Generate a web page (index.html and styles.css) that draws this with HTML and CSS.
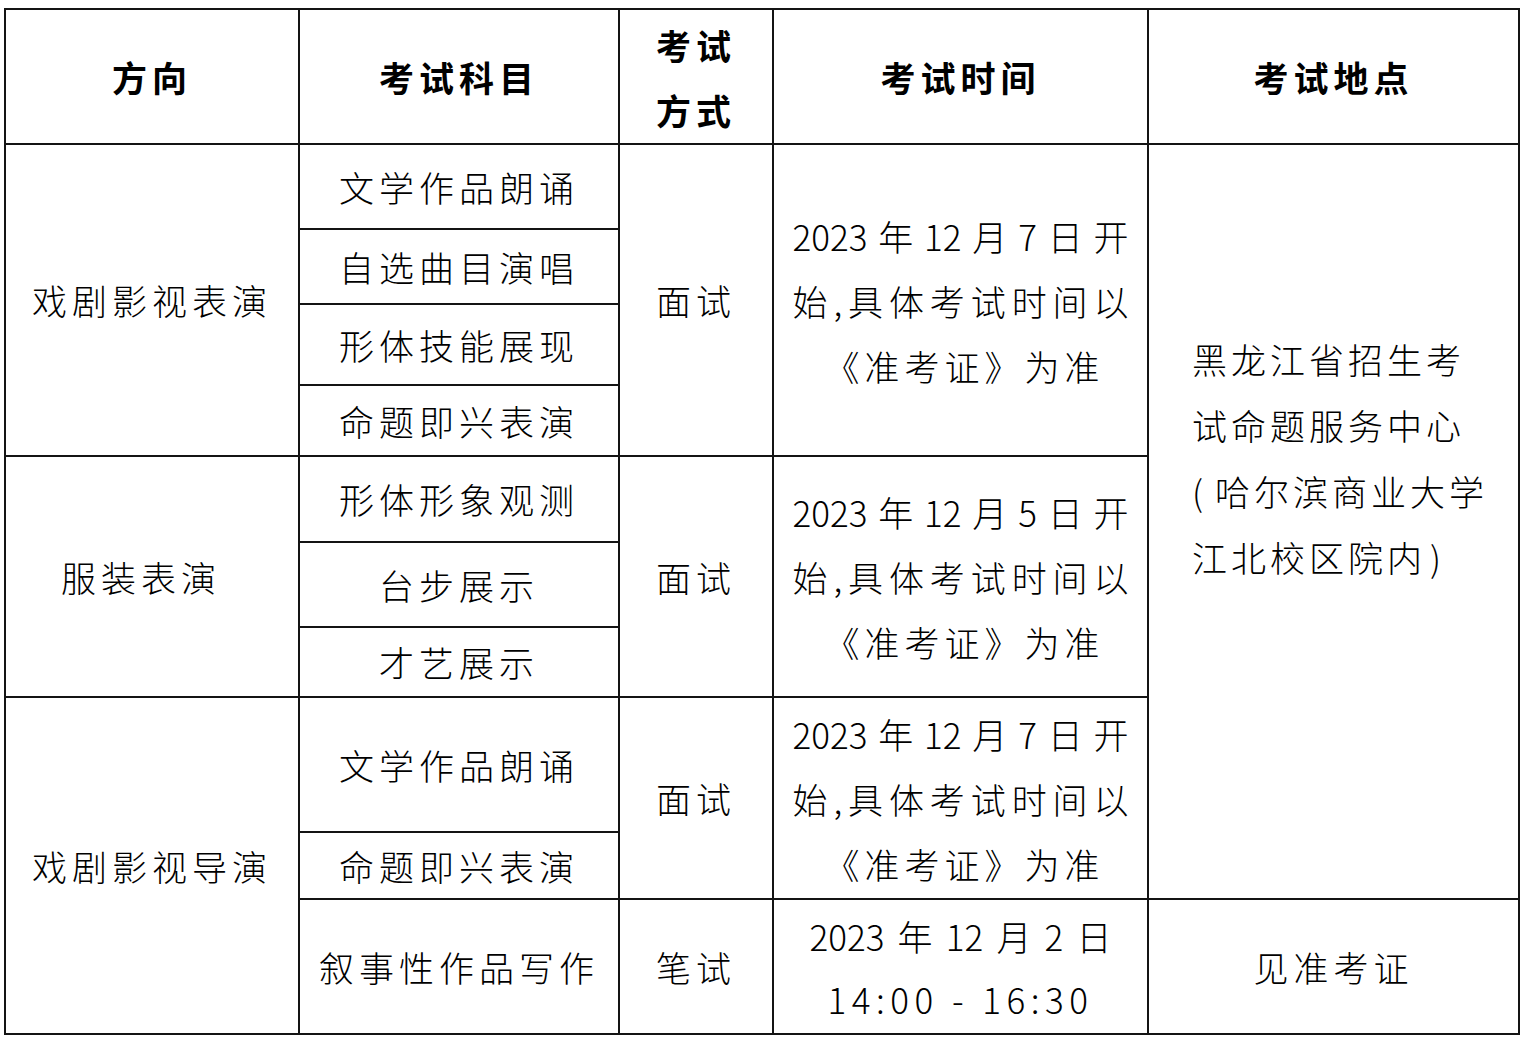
FILE: index.html
```html
<!DOCTYPE html>
<html lang="zh-CN">
<head>
<meta charset="utf-8">
<title>考试安排</title>
<link rel="stylesheet" href="styles.css">
</head>
<body>
<table class="exam">
  <colgroup>
    <col class="c1"><col class="c2"><col class="c3"><col class="c4"><col class="c5">
  </colgroup>
  <tr class="r-head">
    <th>方向</th>
    <th>考试科目</th>
    <th class="two">考试<br>方式</th>
    <th>考试时间</th>
    <th>考试地点</th>
  </tr>
  <tr class="r85">
    <td rowspan="4">戏剧影视表演</td>
    <td>文学作品朗诵</td>
    <td rowspan="4">面试</td>
    <td rowspan="4" class="date">
      <div class="jl">2023年12月7日开</div>
      <div class="jl">始,具体考试时间以</div>
      <div class="cl">《准考证》为准</div>
    </td>
    <td rowspan="9" class="addr">黑龙江省招生考<br>试命题服务中心<br><span class="paren open">(</span>哈尔滨商业大学<br>江北校区院内<span class="paren close">)</span></td>
  </tr>
  <tr class="r75"><td>自选曲目演唱</td></tr>
  <tr class="r81"><td>形体技能展现</td></tr>
  <tr class="r71"><td>命题即兴表演</td></tr>
  <tr class="r86">
    <td rowspan="3" class="offset">服装表演</td>
    <td>形体形象观测</td>
    <td rowspan="3">面试</td>
    <td rowspan="3" class="date">
      <div class="jl">2023年12月5日开</div>
      <div class="jl">始,具体考试时间以</div>
      <div class="cl">《准考证》为准</div>
    </td>
  </tr>
  <tr class="r85"><td>台步展示</td></tr>
  <tr class="r70"><td>才艺展示</td></tr>
  <tr class="r135">
    <td rowspan="3">戏剧影视导演</td>
    <td>文学作品朗诵</td>
    <td rowspan="2">面试</td>
    <td rowspan="2" class="date">
      <div class="jl">2023年12月7日开</div>
      <div class="jl">始,具体考试时间以</div>
      <div class="cl">《准考证》为准</div>
    </td>
  </tr>
  <tr class="r67"><td>命题即兴表演</td></tr>
  <tr class="r135">
    <td>叙事性作品写作</td>
    <td>笔试</td>
    <td class="date last">
      <div class="jl wide">2023年12月2日</div>
      <div class="cl time">14:00 - 16:30</div>
    </td>
    <td>见准考证</td>
  </tr>
</table>
</body>
</html>
```

FILE: styles.css
```css
html, body {
  margin: 0;
  padding: 0;
  background: #ffffff;
}

body {
  font-family: "Noto Sans CJK SC", "Noto Sans", sans-serif;
  color: #000000;
}

.exam {
  margin: 8px 0 0 4px;
  width: 1514px;
  table-layout: fixed;
  border-collapse: collapse;
}

.c1 { width: 294px; }
.c2 { width: 320px; }
.c3 { width: 154px; }
.c4 { width: 375px; }
.c5 { width: 371px; }

.exam th,
.exam td {
  border: 2px solid #141414;
  padding: 0;
  text-align: center;
  vertical-align: middle;
  font-size: 35px;
  letter-spacing: 5px;
  line-height: 64px;
  font-weight: 300;
  white-space: nowrap;
}

.exam th {
  font-weight: 700;
}

.exam th.two {
  line-height: 65px;
}

.exam td.offset {
  padding-right: 22px;
}

.r-head { height: 135px; }
.r85 { height: 85px; }
.r75 { height: 75px; }
.r81 { height: 81px; }
.r71 { height: 71px; }
.r86 { height: 86px; }
.r70 { height: 70px; }
.r135 { height: 135px; }
.r67 { height: 67px; }

.exam td.date {
  padding: 0;
  letter-spacing: 0;
  line-height: 65px;
}

.date .jl {
  width: 336px;
  margin: 0 auto;
  text-align: justify;
  text-align-last: justify;
}

.date .jl.wide {
  width: 302px;
}

.date .cl {
  text-align: center;
  letter-spacing: 5px;
  padding-left: 8px;
}

.date.last .jl,
.date.last .cl {
  line-height: 63px;
}

.date .time {
  letter-spacing: 5.5px;
  padding-left: 0;
}

.exam td.addr {
  vertical-align: top;
  text-align: left;
  padding: 181px 0 0 43px;
  line-height: 66px;
  letter-spacing: 4px;
}

.addr .open {
  margin-right: 8px;
}

.addr .close {
  margin-left: 4px;
}
```
